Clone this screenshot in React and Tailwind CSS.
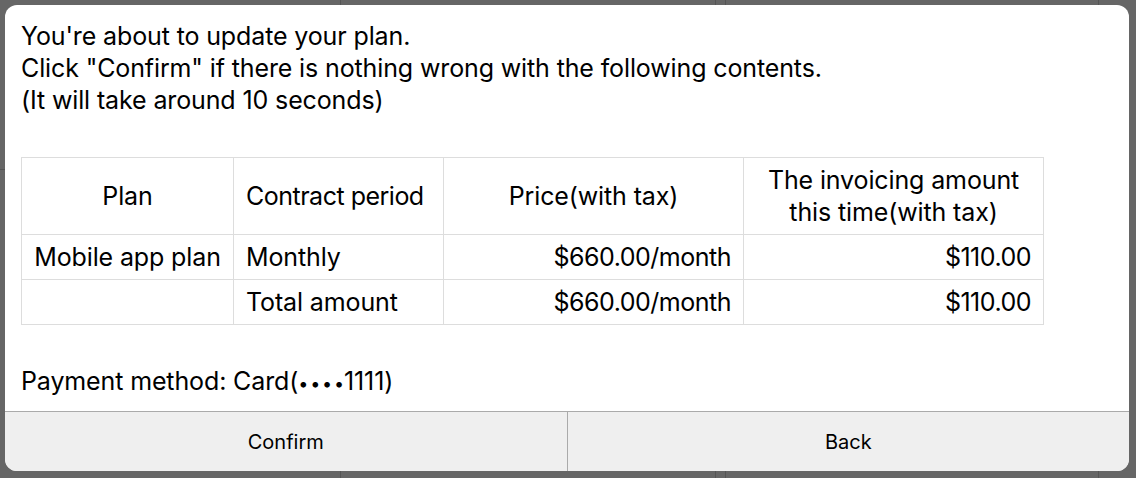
import React from "react";

const rows = [
  { plan: "Mobile app plan", period: "Monthly", price: "$660.00/month", amount: "$110.00" },
  { plan: "", period: "Total amount", price: "$660.00/month", amount: "$110.00" },
];

const App = () => {
  return (
    <div
      className="relative w-[1136px] h-[478px] bg-[#666666] overflow-hidden text-black"
      style={{ fontFamily: 'Inter, "Liberation Sans", Arial, sans-serif' }}
    >
      {/* page behind the dialog */}
      <div className="flex h-full">
        <div className="w-[341px] border-r border-[#555555] flex flex-col">
          <div className="h-[170px] border-b border-[#555555]" />
        </div>
        <div className="w-[375px] border-r border-[#555555]" />
        <div className="w-[10px] border-r border-[#555555]" />
        <div className="w-[373px] border-r border-[#555555]" />
        <div className="flex-1" />
      </div>

      {/* dialog */}
      <div className="absolute left-[5px] top-[5px] w-[1124px] h-[466px] bg-white rounded-[12px] overflow-hidden flex flex-col">
        <div className="flex-1 px-4 pt-[15px] text-[25px] leading-[32px] tracking-[-0.005em]">
          <p>You're about to update your plan.</p>
          <p>Click "Confirm" if there is nothing wrong with the following contents.</p>
          <p>(It will take around 10 seconds)</p>

          <table className="mt-[41px] w-[1022px] table-fixed border-collapse border border-[#dddddd] whitespace-nowrap">
            <thead>
              <tr className="h-[77px]">
                <th className="w-[212px] border border-[#dddddd] font-normal text-center">Plan</th>
                <th className="w-[210px] border border-[#dddddd] font-normal text-left px-[12px] tracking-[-0.02em]">Contract period</th>
                <th className="w-[300px] border border-[#dddddd] font-normal text-center">Price(with tax)</th>
                <th className="w-[300px] border border-[#dddddd] font-normal text-center">
                  The invoicing amount
                  <br />
                  this time(with tax)
                </th>
              </tr>
            </thead>
            <tbody>
              {rows.map((r, i) => (
                <tr key={i} className="h-[45px]">
                  <td className="border border-[#dddddd] text-center">{r.plan}</td>
                  <td className="border border-[#dddddd] text-left px-[12px]">{r.period}</td>
                  <td className="border border-[#dddddd] text-right px-[12px] tracking-[-0.02em]">{r.price}</td>
                  <td className="border border-[#dddddd] text-right px-[12px] tracking-[-0.02em]">{r.amount}</td>
                </tr>
              ))}
            </tbody>
          </table>

          <p className="mt-[40px]">
            Payment method: Card(<span className="text-[18px] tracking-[0.1em]">•••</span><span className="text-[18px]">•</span>1111)
          </p>
        </div>

        <div className="h-[60px] flex border-t border-[#aaaaaa] bg-[#efefef] text-[20px]">
          <button className="flex-1 border-r border-[#aaaaaa]">Confirm</button>
          <button className="flex-1">Back</button>
        </div>
      </div>
    </div>
  );
};

export default App;
